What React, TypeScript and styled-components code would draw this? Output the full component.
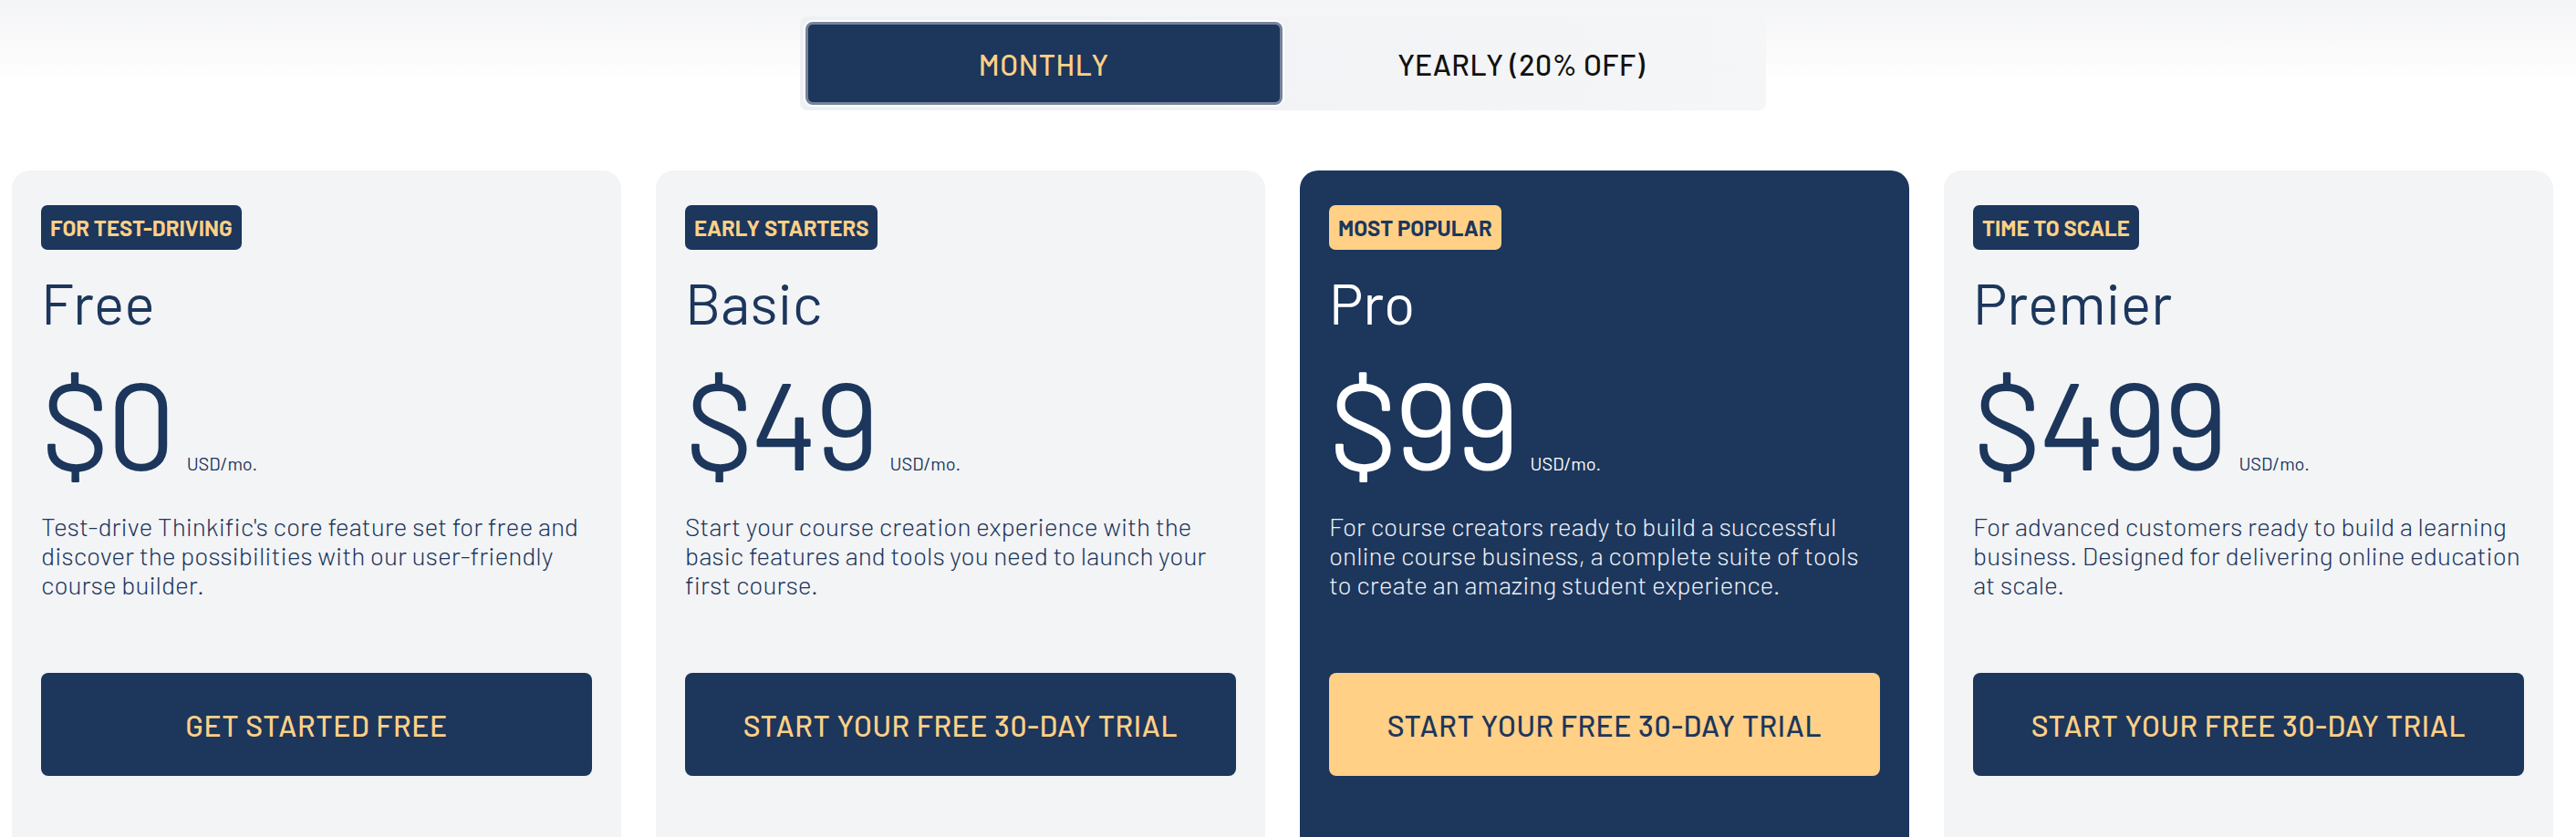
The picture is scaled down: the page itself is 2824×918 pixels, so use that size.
import React, { useState } from "react";
import styled, { createGlobalStyle, css } from "styled-components";

const navy = "#1c365c";
const yellow = "#ffd086";

const GlobalStyle = createGlobalStyle`
  html, body {
    margin: 0;
    padding: 0;
  }
  body {
    font-family: "Barlow", "Roboto", sans-serif;
    background: linear-gradient(180deg, #f4f5f7 0px, #f9f9fa 45px, #ffffff 90px);
    min-height: 100vh;
  }
  * {
    box-sizing: border-box;
  }
`;

const Page = styled.div`
  display: flex;
  flex-direction: column;
  align-items: center;
  padding: 18px 25px 0 13px;
`;

const Toggle = styled.div`
  display: grid;
  grid-template-columns: 1fr 1fr;
  width: 1059px;
  height: 103px;
  padding: 6px;
  border-radius: 8px;
  background: linear-gradient(90deg, #eef0f3, #f5f6f8);
`;

const ToggleButton = styled.button<{ $active?: boolean }>`
  font-family: "Barlow", "Roboto", sans-serif;
  font-size: 32px;
  font-weight: 500;
  letter-spacing: 0.5px;
  border: none;
  border-radius: 8px;
  background: transparent;
  color: #111;
  cursor: pointer;
  ${(p) =>
    p.$active &&
    css`
      background: ${navy};
      color: ${yellow};
      border: 3px solid #76839a;
      box-shadow: 0 0 0 2px #ffffff;
    `}
`;

const Cards = styled.div`
  display: grid;
  grid-template-columns: repeat(4, 668px);
  gap: 38px;
  margin-top: 66px;
`;

const Card = styled.div<{ $featured?: boolean }>`
  display: flex;
  flex-direction: column;
  align-items: flex-start;
  height: 760px;
  padding: 38px 32px 0 32px;
  border-radius: 20px 20px 0 0;
  background: ${(p) => (p.$featured ? navy : "#f3f4f6")};
  color: ${(p) => (p.$featured ? "#ffffff" : navy)};
`;

const Badge = styled.span<{ $featured?: boolean }>`
  display: inline-flex;
  align-items: center;
  height: 49px;
  padding: 0 10px;
  border-radius: 7px;
  font-size: 24px;
  font-weight: 700;
  background: ${(p) => (p.$featured ? yellow : navy)};
  color: ${(p) => (p.$featured ? navy : yellow)};
`;

const PlanName = styled.h2`
  margin: 20px 0 0 0;
  font-size: 63px;
  font-weight: 400;
  line-height: 1.2;
`;

const PriceRow = styled.div`
  display: flex;
  align-items: baseline;
  margin-top: 13px;
`;

const Price = styled.span`
  font-size: 134px;
  font-weight: 400;
  line-height: 1.2;
  letter-spacing: -3px;
`;

const Unit = styled.span`
  margin-left: 15px;
  font-size: 20px;
  font-weight: 400;
`;

const Description = styled.p<{ $featured?: boolean }>`
  margin: 18px 0 0 0;
  font-size: 28px;
  font-weight: 300;
  line-height: 32px;
  color: ${(p) => (p.$featured ? "#eef0f4" : navy)};
`;

const CtaButton = styled.button<{ $featured?: boolean }>`
  width: 100%;
  height: 113px;
  margin-top: 81px;
  border: none;
  border-radius: 8px;
  font-family: "Barlow", "Roboto", sans-serif;
  font-size: 32px;
  font-weight: 500;
  letter-spacing: 0.6px;
  cursor: pointer;
  background: ${(p) => (p.$featured ? yellow : navy)};
  color: ${(p) => (p.$featured ? navy : yellow)};
`;

type Plan = {
  badge: string;
  name: string;
  price: string;
  description: string;
  cta: string;
  featured?: boolean;
};

const plans: Plan[] = [
  {
    badge: "FOR TEST-DRIVING",
    name: "Free",
    price: "$0",
    description:
      "Test-drive Thinkific's core feature set for free and discover the possibilities with our user-friendly course builder.",
    cta: "GET STARTED FREE",
  },
  {
    badge: "EARLY STARTERS",
    name: "Basic",
    price: "$49",
    description:
      "Start your course creation experience with the basic features and tools you need to launch your first course.",
    cta: "START YOUR FREE 30-DAY TRIAL",
  },
  {
    badge: "MOST POPULAR",
    name: "Pro",
    price: "$99",
    description:
      "For course creators ready to build a successful online course business, a complete suite of tools to create an amazing student experience.",
    cta: "START YOUR FREE 30-DAY TRIAL",
    featured: true,
  },
  {
    badge: "TIME TO SCALE",
    name: "Premier",
    price: "$499",
    description:
      "For advanced customers ready to build a learning business. Designed for delivering online education at scale.",
    cta: "START YOUR FREE 30-DAY TRIAL",
  },
];

export default function App() {
  const [period, setPeriod] = useState<"monthly" | "yearly">("monthly");
  return (
    <>
      <GlobalStyle />
      <Page>
        <Toggle>
          <ToggleButton $active={period === "monthly"} onClick={() => setPeriod("monthly")}>
            MONTHLY
          </ToggleButton>
          <ToggleButton $active={period === "yearly"} onClick={() => setPeriod("yearly")}>
            YEARLY (20% OFF)
          </ToggleButton>
        </Toggle>
        <Cards>
          {plans.map((plan) => (
            <Card key={plan.name} $featured={plan.featured}>
              <Badge $featured={plan.featured}>{plan.badge}</Badge>
              <PlanName>{plan.name}</PlanName>
              <PriceRow>
                <Price>{plan.price}</Price>
                <Unit>USD/mo.</Unit>
              </PriceRow>
              <Description $featured={plan.featured}>{plan.description}</Description>
              <CtaButton $featured={plan.featured}>{plan.cta}</CtaButton>
            </Card>
          ))}
        </Cards>
      </Page>
    </>
  );
}
